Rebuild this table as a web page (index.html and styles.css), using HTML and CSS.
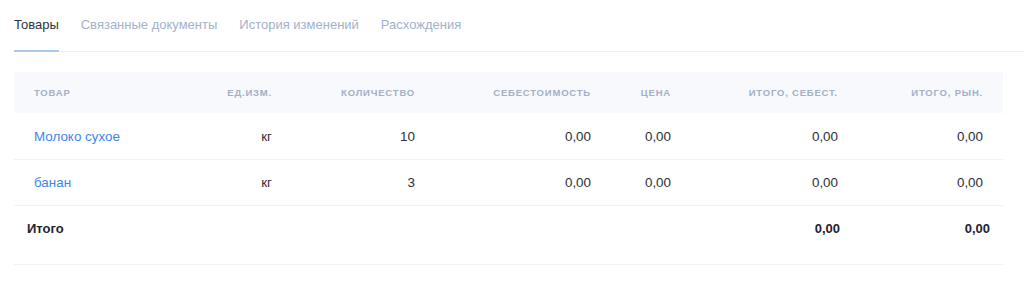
FILE: index.html
```html
<!DOCTYPE html>
<html lang="ru">
<head>
<meta charset="utf-8">
<link rel="stylesheet" href="styles.css">
</head>
<body>
<div class="page">
  <nav class="tabs">
    <a class="tab active">Товары</a>
    <a class="tab">Связанные документы</a>
    <a class="tab">История изменений</a>
    <a class="tab">Расхождения</a>
  </nav>
  <div class="card">
    <table class="grid">
      <colgroup>
        <col class="c1"><col class="c2"><col class="c3"><col class="c4"><col class="c5"><col class="c6"><col class="c7">
      </colgroup>
      <thead>
        <tr>
          <th class="left">Товар</th>
          <th>Ед.изм.</th>
          <th>Количество</th>
          <th>Себестоимость</th>
          <th>Цена</th>
          <th>Итого, себест.</th>
          <th>Итого, рын.</th>
        </tr>
      </thead>
      <tbody>
        <tr>
          <td class="left"><a class="link">Молоко сухое</a></td>
          <td>кг</td>
          <td>10</td>
          <td>0,00</td>
          <td>0,00</td>
          <td>0,00</td>
          <td>0,00</td>
        </tr>
        <tr>
          <td class="left"><a class="link">банан</a></td>
          <td>кг</td>
          <td>3</td>
          <td>0,00</td>
          <td>0,00</td>
          <td>0,00</td>
          <td>0,00</td>
        </tr>
      </tbody>
      <tfoot>
        <tr>
          <td class="left first">Итого</td>
          <td></td>
          <td></td>
          <td></td>
          <td></td>
          <td class="sum6">0,00</td>
          <td class="last">0,00</td>
        </tr>
      </tfoot>
    </table>
  </div>
</div>
</body>
</html>
```

FILE: styles.css
```css
* { box-sizing: border-box; }
html, body { margin: 0; padding: 0; background: #fff; }
body {
  font-family: "Liberation Sans", Arial, sans-serif;
  color: #2b2f36;
}
.page {
  padding: 0 0 0 14px;
}
.tabs {
  display: flex;
  gap: 22px;
  height: 52px;
  border-bottom: 1px solid #eef0f4;
}
.tab {
  font-size: 13px;
  color: #a2b1cb;
  padding-top: 17px;
  height: 52px;
  border-bottom: 2px solid transparent;
  margin-bottom: -1px;
  white-space: nowrap;
}
.tab.active {
  color: #2d3440;
  border-bottom-color: #a9c9f1;
}
.card {
  margin-top: 20px;
  width: 989px;
}
.grid {
  width: 989px;
  border-collapse: collapse;
  table-layout: fixed;
}
.c1 { width: 180px; }
.c2 { width: 98px; }
.c3 { width: 143px; }
.c4 { width: 176px; }
.c5 { width: 80px; }
.c6 { width: 167px; }
.c7 { width: 145px; }
thead th {
  background: #f7f9fc;
  height: 41px;
  padding: 0 20px;
  font-size: 9.5px;
  font-weight: 700;
  letter-spacing: 0.8px;
  text-transform: uppercase;
  color: #a3b0c7;
  text-align: right;
  white-space: nowrap;
}
th.left, td.left { text-align: left; }
tbody td {
  height: 46px;
  padding: 1px 20px 0;
  font-size: 13.4px;
  color: #2b2f36;
  text-align: right;
  border-bottom: 1px solid #f0f2f5;
  white-space: nowrap;
}
.link { color: #3d86ee; }
tfoot td {
  height: 59px;
  padding: 15px 20px 0;
  vertical-align: top;
  font-size: 13px;
  font-weight: 700;
  color: #1d2330;
  text-align: right;
  border-bottom: 1px solid #f0f2f5;
}
tfoot td.first { padding-left: 13px; }
tfoot td.sum6 { padding-right: 18px; }
tfoot td.last { padding-right: 13px; }
```
